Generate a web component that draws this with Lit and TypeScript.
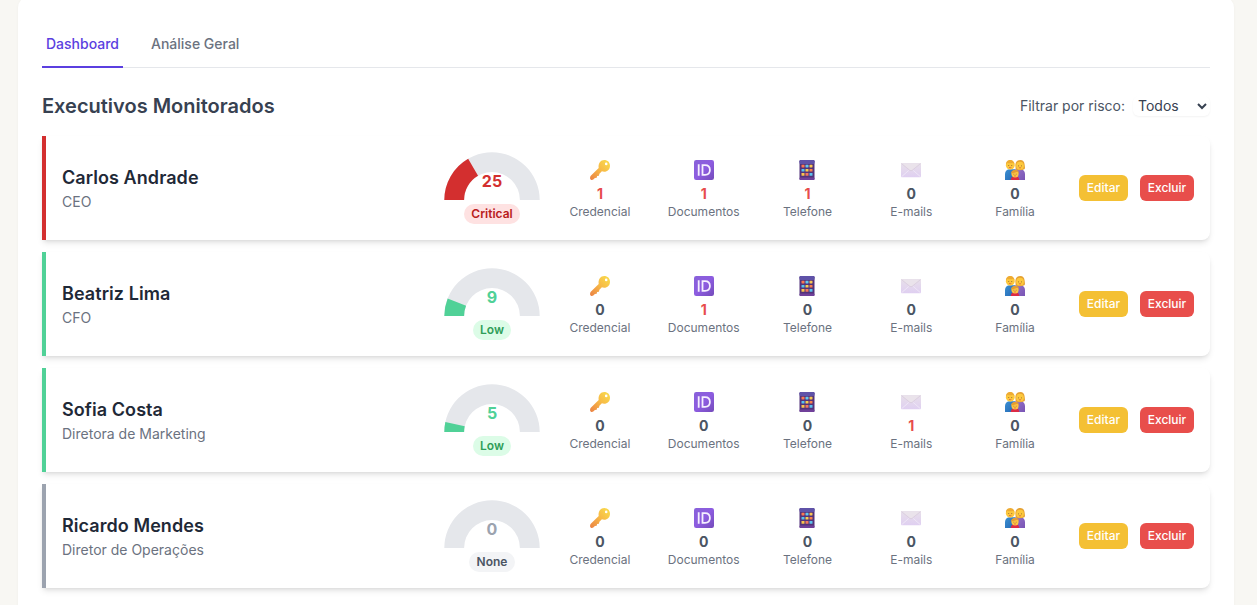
import { LitElement, html, css, svg } from "lit";
import { customElement, property, state } from "lit/decorators.js";

type Risk = "critical" | "low" | "none";
interface Executive {
  name: string;
  role: string;
  score: number;
  risk: Risk;
  counts: number[];
}

const METRICS = ["Credencial", "Documentos", "Telefone", "E-mails", "Família"];
const COLORS: Record<Risk, string> = { critical: "#d32f2f", low: "#50d197", none: "#9ca3af" };
const LABELS: Record<Risk, string> = { critical: "Critical", low: "Low", none: "None" };
const MAX_SCORE = 75;

const EXECUTIVES: Executive[] = [
  { name: "Carlos Andrade", role: "CEO", score: 25, risk: "critical", counts: [1, 1, 1, 0, 0] },
  { name: "Beatriz Lima", role: "CFO", score: 9, risk: "low", counts: [0, 1, 0, 0, 0] },
  { name: "Sofia Costa", role: "Diretora de Marketing", score: 5, risk: "low", counts: [0, 0, 0, 1, 0] },
  { name: "Ricardo Mendes", role: "Diretor de Operações", score: 0, risk: "none", counts: [0, 0, 0, 0, 0] },
];

const keyIcon = svg`
  <defs><linearGradient id="k" x1="1" y1="0" x2="0" y2="1"><stop offset="0" stop-color="#f9df4d"/><stop offset=".5" stop-color="#f7b846"/><stop offset="1" stop-color="#ea8045"/></linearGradient></defs>
  <path fill="url(#k)" fill-rule="evenodd" d="M14.200 0C17.600 0 20 2.400 20 5.700C20 9.200 17.600 11.700 14.100 11.700C13.200 11.700 12.500 11.500 11.900 11.300L9.400 13.800L8.900 15.700L7.100 16L6.700 17.700L4.900 18.100L3.300 19.500C2.200 20.400 0.300 20 0.100 18.500C0 17.400 0.100 16.500 0.800 15.800L8.700 8C7.900 3.800 10.400 0 14.200 0ZM16.200 2.600A1.300 1.300 0 1 0 16.200 5.200A1.300 1.300 0 1 0 16.200 2.600Z"/>`;
const idIcon = svg`
  <defs><linearGradient id="i" x1="0" y1="0" x2="1" y2="1"><stop offset="0" stop-color="#8861d9"/><stop offset=".5" stop-color="#8d5ce0"/><stop offset="1" stop-color="#744bba"/></linearGradient></defs>
  <rect width="20" height="20" rx="2.200" fill="url(#i)"/>
  <path d="M4.700 4.300V15.700M8.500 5.200H11C14.100 5.200 15.900 7 15.900 10C15.900 13 14.100 14.800 11 14.800H8.500Z" fill="none" stroke="#f5efff" stroke-width="1.800"/>`;
const pad = ["#fb7950", "#64c9ec", "#f8c853", "#56c3ee", "#f9ce4e", "#fa804d", "#f9c44d", "#f2785f", "#5bc3ee"];
const phoneIcon = svg`
  <rect x="2.500" y="0" width="15" height="20" rx="1.200" fill="#53337a"/>
  <rect x="2.500" y="0" width="15" height="4" rx="1.200" fill="#5f52a8"/>
  <rect x="2.500" y="17.500" width="15" height="2.500" rx="1" fill="#70409a"/>
  ${pad.map((c, i) => svg`<rect x=${4.5 + (i % 3) * 4} y=${4.7 + Math.floor(i / 3) * 4.2} width="3" height="2.700" rx=".4" fill=${c}/>`)}`;
const mailIcon = svg`
  <defs><linearGradient id="m" x1="0" y1="0" x2="0" y2="1"><stop offset="0" stop-color="#e8e0ea"/><stop offset="1" stop-color="#dfcff1"/></linearGradient></defs>
  <rect x="0" y="3" width="20" height="14.200" rx="1" fill="url(#m)"/>
  <path d="M.7 16.600L7.800 10.400M19.300 16.600L12.200 10.400" stroke="#eee6f6" stroke-width="1" fill="none"/>
  <path d="M.4 3.500L8.800 10.300Q10 11.200 11.200 10.300L19.600 3.500" fill="#eae3eb" stroke="#d5c8da" stroke-width=".7"/>`;
const familyIcon = svg`
  <defs>
    <linearGradient id="fb" x1="0" y1="0" x2="1" y2="1"><stop offset="0" stop-color="#3b8fd2"/><stop offset="1" stop-color="#2468b4"/></linearGradient>
    <linearGradient id="fp" x1="0" y1="0" x2="1" y2="1"><stop offset="0" stop-color="#9472c9"/><stop offset="1" stop-color="#7954b4"/></linearGradient>
  </defs>
  <path d="M0 20V14C0 11 2 9.300 5 9.300H10V20Z" fill="url(#fb)"/>
  <path d="M20 20V14C20 11 18 9.300 15 9.300H10V20Z" fill="url(#fp)"/>
  <circle cx="5.300" cy="5.200" r="4.400" fill="#fdc83c"/>
  <path d="M1 5C.6 2 2.500 0 5.200 0S9.700 2 9.500 5L8.300 2.700Q4.500 3.800 2.300 2.700Z" fill="#eeab32"/>
  <path d="M10.500 9.500C11 8 10 6 10.500 4C11 1.300 13 0 15.200 0C18 0 19.500 2 19.600 4.500C19.700 6.500 20.500 8 19.400 9.300Q15 11 10.500 9.500Z" fill="#e5a132"/>
  <circle cx="15" cy="5.700" r="3.900" fill="#fdc83c"/>
  <path d="M3.700 5.200V6M6.700 5.200V6M13.500 5.500V6.300M16.500 5.500V6.300" stroke="#76502e" stroke-width=".8"/>
  <path d="M4 7.300Q5.200 8.200 6.400 7.300M13.900 7.600Q15 8.400 16.100 7.600" stroke="#d64a45" stroke-width=".7" fill="none"/>
  <path d="M5.800 20C5.800 17.500 7.500 16 10 16S14.200 17.500 14.200 20Z" fill="#dc2b45"/>
  <circle cx="10" cy="13.800" r="3.600" fill="#fdc543"/>
  <path d="M6.200 13.500C6 11 7.700 10 10 10S14 11 13.800 13.500L12.500 11.800Q9.500 12.900 6.200 13.500Z" fill="#e59c31"/>
  <path d="M8.800 13.800V14.500M11.200 13.800V14.500" stroke="#76502e" stroke-width=".7"/>
  <path d="M9 15.700Q10 16.500 11 15.700" stroke="#d64a45" stroke-width=".6" fill="none"/>`;
const ICONS = [keyIcon, idIcon, phoneIcon, mailIcon, familyIcon];

@customElement("risk-gauge")
export class RiskGauge extends LitElement {
  @property({ type: Number }) score = 0;
  @property() risk: Risk = "none";

  static styles = css`
    :host { display: flex; flex-direction: column; align-items: center; width: 96px; }
    .dial { display: grid; width: 96px; height: 48px; }
    .dial svg, .value { grid-area: 1 / 1; }
    .dial svg { display: block; }
    .value { align-self: end; text-align: center; font-size: 16px; line-height: 24px; font-weight: 700; padding-bottom: 7px; }
    .badge { margin-top: 4px; padding: 2px 7.500px; border-radius: 10px; font-size: 12px; line-height: 16px; font-weight: 600; }
    .value.critical { color: #d32f2f; }
    .value.low { color: #50d197; }
    .value.none { color: #9ca3af; }
    .badge.critical { background: #fee2e2; color: #b91c1c; }
    .badge.low { background: #dcfce7; color: #2f9e58; }
    .badge.none { background: #f3f4f6; color: #4b5563; }
  `;

  private slice(from: number, to: number) {
    const at = (r: number, f: number) =>
      `${48 - r * Math.cos(f * Math.PI)} ${48 - r * Math.sin(f * Math.PI)}`;
    return `M${at(47.7, from)}A47.7 47.7 0 0 1 ${at(47.7, to)}L${at(27.9, to)}A27.9 27.9 0 0 0 ${at(27.9, from)}Z`;
  }

  render() {
    return html`
      <div class="dial">
        <svg width="96" height="48" viewBox="0 0 96 48">
          <path d=${this.slice(0, 1)} fill="#e5e7eb"></path>
          ${this.score > 0 ? svg`<path d=${this.slice(0, this.score / MAX_SCORE)} fill=${COLORS[this.risk]}></path>` : null}
        </svg>
        <span class="value ${this.risk}">${this.score}</span>
      </div>
      <span class="badge ${this.risk}">${LABELS[this.risk]}</span>
    `;
  }
}

@customElement("executive-card")
export class ExecutiveCard extends LitElement {
  @property({ attribute: false }) person!: Executive;

  static styles = css`
    .card {
      display: grid; grid-template-columns: 374px 112px 519px 1fr; align-items: center;
      box-sizing: border-box; height: 104px; padding: 0 16px;
      border-left: 4px solid; border-radius: 0 8px 8px 0; background: #fff;
      box-shadow: 0 4px 6px -1px rgba(0, 0, 0, 0.1), 0 2px 4px -2px rgba(0, 0, 0, 0.1);
    }
    .critical { border-left-color: #d32f2f; }
    .low { border-left-color: #50d197; }
    .none { border-left-color: #9ca3af; }
    .name { margin: 0; font-size: 18px; line-height: 28px; font-weight: 600; letter-spacing: 0.07px; color: #1f2937; }
    .role { margin: 0; font-size: 14px; line-height: 20px; color: #6b7280; }
    .gauge { display: flex; justify-content: center; }
    .metrics { display: grid; grid-template-columns: repeat(5, 1fr); }
    .metric { display: flex; flex-direction: column; align-items: center; }
    .metric svg { display: block; margin: 4px 0; }
    .count { font-size: 14px; line-height: 20px; font-weight: 700; color: #4b5563; }
    .count.hit { color: #e74c4c; }
    .label { font-size: 12px; line-height: 16px; color: #6b7280; }
    .actions { display: flex; justify-content: flex-end; gap: 12px; }
    button {
      height: 26px; padding: 0; border: 0; border-radius: 6px; color: #fff;
      font: 500 12px/16px Inter, sans-serif;
    }
    .edit { width: 49px; background: #f4c034; }
    .delete { width: 54px; background: #e84e4b; }
  `;

  render() {
    const p = this.person;
    return html`
      <article class="card ${p.risk}">
        <div>
          <h3 class="name">${p.name}</h3>
          <p class="role">${p.role}</p>
        </div>
        <div class="gauge"><risk-gauge .score=${p.score} .risk=${p.risk}></risk-gauge></div>
        <div class="metrics">
          ${METRICS.map((label, i) => html`
            <div class="metric">
              <svg width="20" height="20" viewBox="0 0 20 20">${ICONS[i]}</svg>
              <span class="count ${p.counts[i] ? "hit" : ""}">${p.counts[i]}</span>
              <span class="label">${label}</span>
            </div>`)}
        </div>
        <div class="actions">
          <button class="edit">Editar</button>
          <button class="delete">Excluir</button>
        </div>
      </article>
    `;
  }
}

@customElement("app-root")
export class AppRoot extends LitElement {
  @state() private tab = 0;

  static styles = css`
    :host {
      display: block; box-sizing: border-box; height: 605px; overflow: hidden;
      padding: 0 23px 0 18px; background: #f8f7f3; font-family: Inter, sans-serif; color: #374151;
    }
    .panel {
      box-sizing: border-box; height: 640px; margin-top: -4px; padding: 24px 24px 0;
      border-radius: 12px; background: #fff; box-shadow: 0 1px 3px rgba(0, 0, 0, 0.04);
    }
    .tabs { display: flex; gap: 24px; height: 47px; border-bottom: 1px solid #e5e7eb; }
    .tab {
      box-sizing: border-box; height: 48px; padding: 14px 4px 0; border: 0; border-bottom: 2px solid transparent;
      background: none; font-size: 14px; line-height: 20px; font-weight: 500; color: #6b7280; cursor: pointer;
    }
    .tab.active { color: #5b3fe0; border-bottom-color: #5b3fe0; }
    .heading { display: flex; align-items: center; justify-content: space-between; height: 28px; margin: 24px 0 16px; }
    h2 { margin: 0; font-size: 20px; line-height: 28px; font-weight: 600; color: #374151; }
    .filter { display: flex; align-items: center; gap: 8px; font-size: 14px; line-height: 20px; color: #4b5563; }
    select {
      box-sizing: border-box; width: 77px; height: 20px; padding: 0 0 2px 1px; border: 0; border-radius: 6px; background: #fff;
      font: 14px/18px Inter, sans-serif; color: #374151; box-shadow: 0 1px 2px rgba(0, 0, 0, 0.05);
    }
    .list { display: grid; gap: 12px; }
  `;

  render() {
    return html`
      <main class="panel">
        <nav class="tabs">
          ${["Dashboard", "Análise Geral"].map((t, i) => html`
            <div class="tab ${this.tab === i ? "active" : ""}" @click=${() => (this.tab = i)}>${t}</div>`)}
        </nav>
        <header class="heading">
          <h2>Executivos Monitorados</h2>
          <label class="filter">Filtrar por risco:
            <select><option>Todos</option><option>Critical</option><option>Low</option><option>None</option></select>
          </label>
        </header>
        <section class="list">
          ${EXECUTIVES.map((p) => html`<executive-card .person=${p}></executive-card>`)}
        </section>
      </main>
    `;
  }
}
